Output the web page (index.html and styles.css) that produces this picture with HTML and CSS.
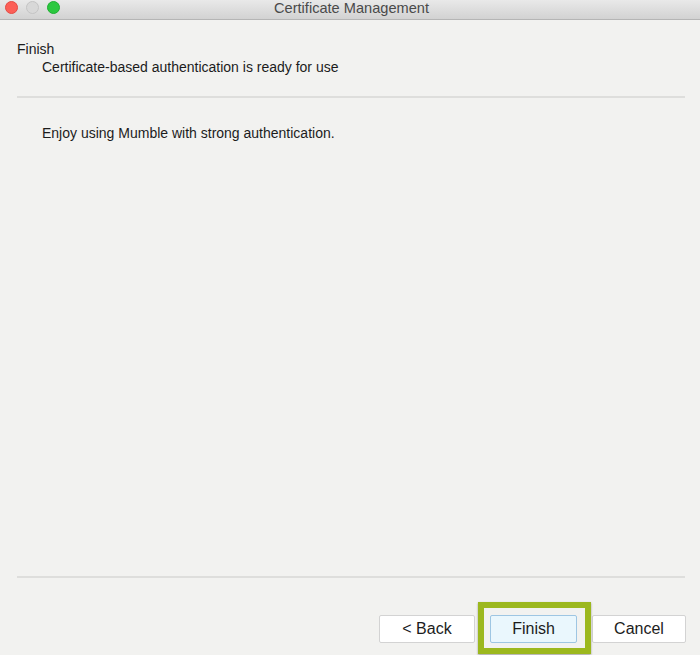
FILE: index.html
```html
<!DOCTYPE html>
<html>
<head>
<meta charset="utf-8">
<link rel="stylesheet" href="styles.css">
</head>
<body>
<div class="window">
  <div class="titlebar">
    <div class="lights">
      <span class="light red"></span>
      <span class="light gray"></span>
      <span class="light green"></span>
    </div>
    <div class="wintitle">Certificate Management</div>
  </div>
  <div class="content">
    <div class="header">
      <div class="page-title">Finish</div>
      <div class="page-sub">Certificate-based authentication is ready for use</div>
    </div>
    <div class="rule"></div>
    <div class="body-text">Enjoy using Mumble with strong authentication.</div>
    <div class="spacer"></div>
    <div class="rule bottom"></div>
    <div class="buttons">
      <button class="btn">&lt; Back</button>
      <div class="focus-wrap">
        <button class="btn primary">Finish</button>
        <span class="highlight"></span>
      </div>
      <button class="btn">Cancel</button>
    </div>
  </div>
</div>
</body>
</html>
```

FILE: styles.css
```css
html, body {
  margin: 0;
  padding: 0;
  background: #f2f2f0;
}
body {
  font-family: "Liberation Sans", Arial, Helvetica, sans-serif;
  font-size: 14px;
  color: #1c1c1c;
}
.window {
  width: 700px;
  height: 655px;
  display: flex;
  flex-direction: column;
  overflow: hidden;
}
.titlebar {
  position: relative;
  height: 19px;
  flex: 0 0 19px;
  background: linear-gradient(#e9e9e9, #d2d2d2);
  border-bottom: 1px solid #b5b5b5;
  display: flex;
  align-items: center;
}
.lights {
  display: flex;
  gap: 8px;
  padding-left: 5px;
  margin-top: -5px;
}
.light {
  width: 13px;
  height: 13px;
  border-radius: 50%;
  box-sizing: border-box;
}
.light.red { background: #fc5f57; border: 1px solid #e44b43; }
.light.gray { background: #d8d8d8; border: 1px solid #c4c4c4; }
.light.green { background: #2bc83f; border: 1px solid #1fae32; }
.wintitle {
  position: absolute;
  left: 0;
  right: 0;
  top: 0;
  text-align: center;
  line-height: 16px;
  font-size: 14.6px;
  color: #4a4a4a;
  padding-left: 3px;
}
.content {
  flex: 1;
  display: flex;
  flex-direction: column;
  padding: 0 15px 0 17px;
}
.header {
  margin-top: 20px;
  line-height: 18px;
}
.page-sub {
  padding-left: 25px;
}
.rule {
  height: 2px;
  background: #dededc;
  margin-top: 20px;
}
.body-text {
  margin-top: 26px;
  padding-left: 25px;
  line-height: 18px;
}
.spacer {
  flex: 1;
}
.rule.bottom {
  margin-top: 0;
  flex: 0 0 2px;
}
.buttons {
  display: flex;
  justify-content: flex-end;
  align-items: center;
  gap: 15px;
  padding: 37px 0 12px 0;
  margin-right: -1px;
}
.btn {
  height: 28px;
  box-sizing: border-box;
  background: #ffffff;
  border: 1px solid #d3d3d3;
  border-radius: 2px;
  font-family: "Liberation Sans", Arial, Helvetica, sans-serif;
  font-size: 16px;
  color: #1c1c1c;
  padding: 0;
  width: 96px;
}
.btn:last-child {
  width: 94px;
}
.focus-wrap {
  position: relative;
  display: flex;
}
.btn.primary {
  width: 87px;
  background: #eaf7fd;
  border: 1px solid #9ec6e3;
}
.highlight {
  position: absolute;
  left: -12px;
  right: -14px;
  top: -13px;
  bottom: -11px;
  border: 6px solid #9cb81e;
  box-shadow: 0 1px 2px rgba(0,0,0,0.35);
  pointer-events: none;
}
```
